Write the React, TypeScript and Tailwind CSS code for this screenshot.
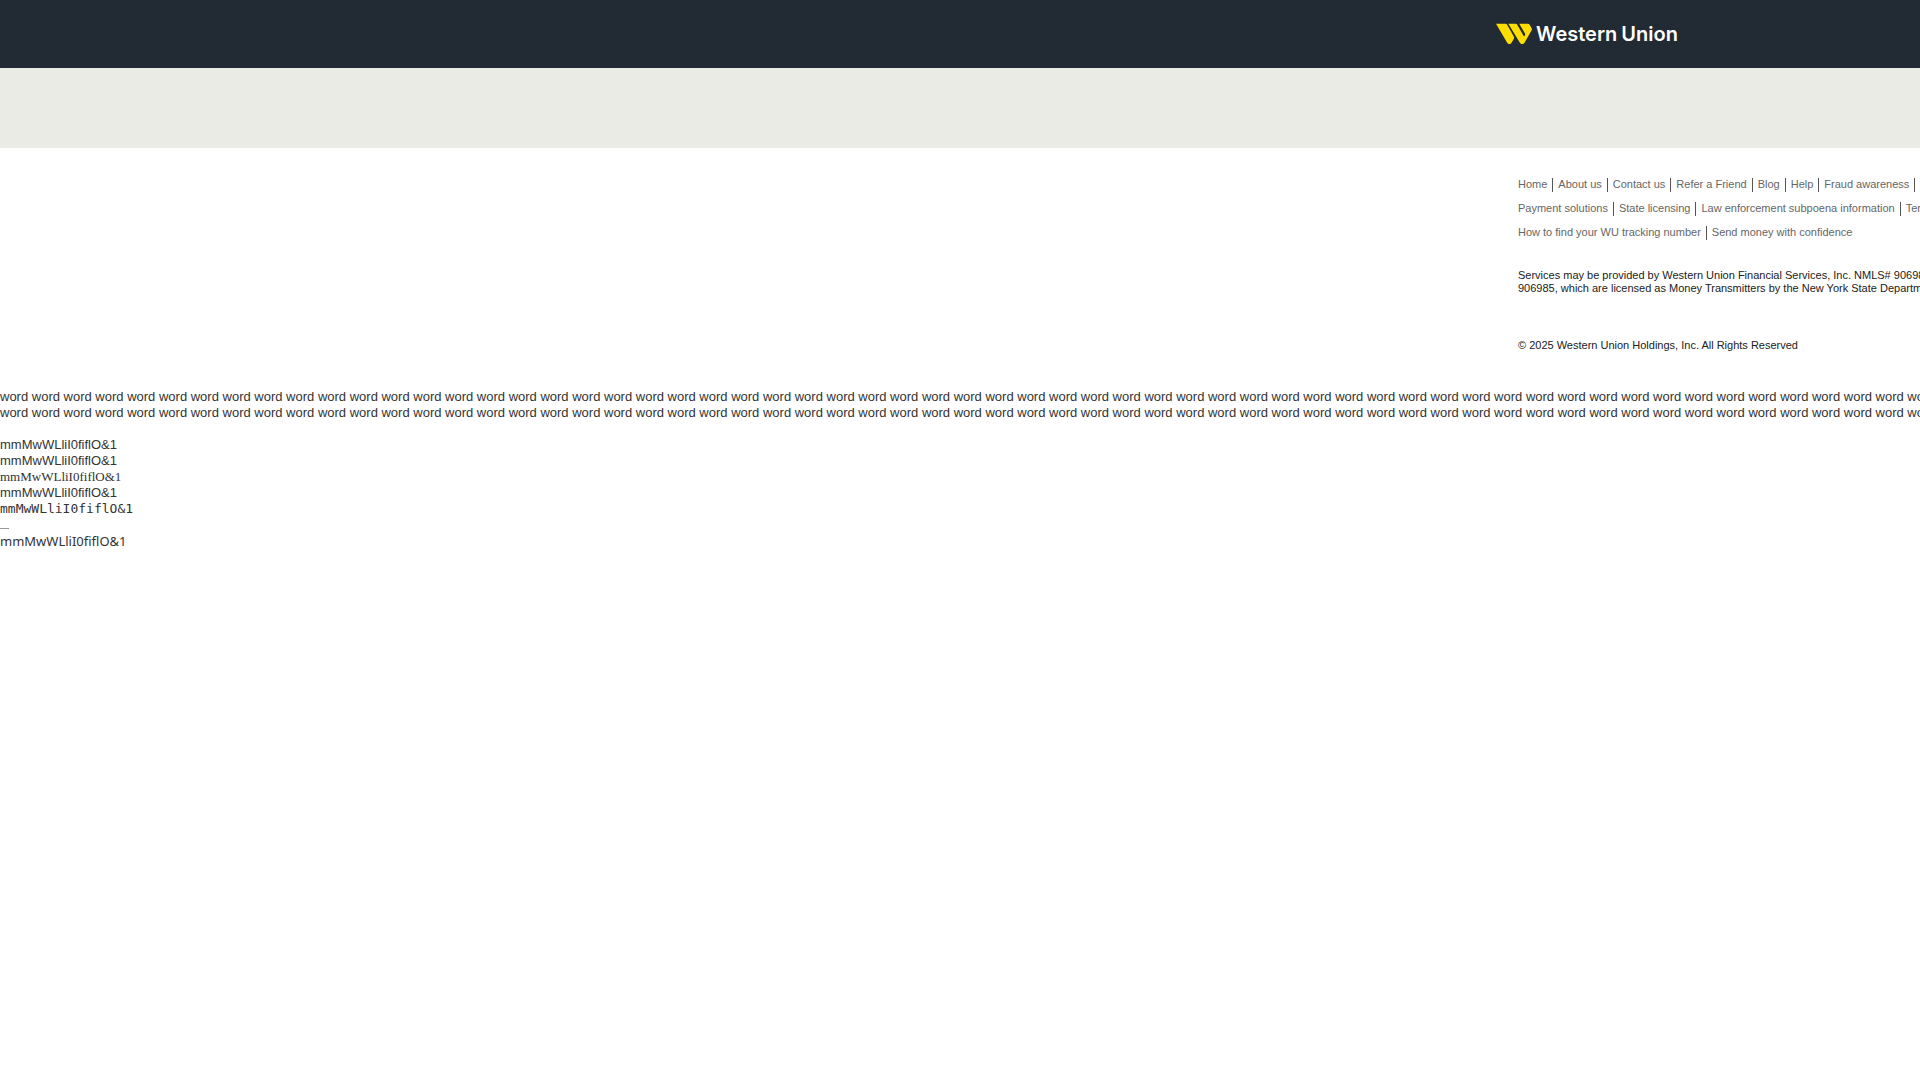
import React from 'react';

const linkRows = [
  ['Home', 'About us', 'Contact us', 'Refer a Friend', 'Blog', 'Help', 'Fraud awareness', 'Terms'],
  ['Payment solutions', 'State licensing', 'Law enforcement subpoena information', 'Terms and Conditions'],
  ['How to find your WU tracking number', 'Send money with confidence'],
];

const words = 'word '.repeat(80).trim();
const sample = 'mmMwWLliI0fiflO&1';

const Logo: React.FC = () => (
  <a href="#" aria-label="Western Union" className="flex items-center gap-1 text-white">
    <svg viewBox="0 0 36 22" className="w-9 h-[22px] shrink-0" fill="#ffdd00">
      <path d="M0 .8h9.2c1 0 1.6.4 2.1 1.2l6.5 11.4c.5.9.5 1.7 0 2.6l-2.3 3.7c-.5.9-1.2 1.3-2.1 1.3-1 0-1.7-.4-2.2-1.3z" />
      <path d="M12.3.8h7c1 0 1.6.4 2.1 1.2l6.3 11c.2.4.6.4.8 0l.5-.9c.3-.5.3-1 0-1.5L23.2.8h8.5c1 0 1.7.4 2.1 1.2l1.7 3c.5.9.5 1.7 0 2.6l-7 12.1c-.5.9-1.3 1.3-2.3 1.3s-1.8-.4-2.3-1.3z" />
    </svg>
    <span className="flex gap-1 font-['Inter',sans-serif] text-[20px] leading-6 font-semibold">
      <span>Western</span>
      <span>Union</span>
    </span>
  </a>
);

const App: React.FC = () => {
  return (
    <div className="overflow-hidden bg-white font-['Liberation_Sans',sans-serif] text-[#333] whitespace-nowrap">
      <header className="grid grid-cols-[1496fr_424fr] items-center h-17 bg-[#222a33]">
        <div className="col-start-2">
          <Logo />
        </div>
      </header>
      <div className="h-20 bg-[#ebebe6]" />

      <footer className="grid grid-cols-[1518fr_402fr] pt-[30px] text-[11px] leading-[13px] text-[#212121]">
        <div className="col-start-2 min-w-0">
          <nav className="flex flex-col gap-[10px] text-[#666]">
            {linkRows.map((row) => (
              <ul key={row[0]} className="flex h-[14px]">
                {row.map((label, i) => (
                  <li
                    key={label}
                    className={i < row.length - 1 ? 'pr-[5px] mr-[5px] border-r border-[#555]' : ''}
                  >
                    <a href="#">{label}</a>
                  </li>
                ))}
              </ul>
            ))}
          </nav>
          <p className="mt-[29px]">
            Services may be provided by Western Union Financial Services, Inc. NMLS# 906983 and/or Western Union
            International Services, LLC NMLS#
            <br />
            906985, which are licensed as Money Transmitters by the New York State Department of Financial Services.
          </p>
          <p className="mt-11">© 2025 Western Union Holdings, Inc. All Rights Reserved</p>
        </div>
      </footer>

      <div className="mt-[37px] text-[13px] leading-4">
        <p>{words}</p>
        <p>{words}</p>
        <div className="mt-4">
          <p>{sample}</p>
          <p>{sample}</p>
          <p className="font-['Liberation_Serif',serif]">{sample}</p>
          <p>{sample}</p>
          <p className="font-['DejaVu_Sans_Mono',monospace]">{sample}</p>
          <p className="h-4 text-[#999]">
            <span className="inline-block w-[9px] border-b border-[#999]" />
          </p>
          <p className="font-['Noto_Sans',sans-serif]">{sample}</p>
        </div>
      </div>
    </div>
  );
};

export default App;
